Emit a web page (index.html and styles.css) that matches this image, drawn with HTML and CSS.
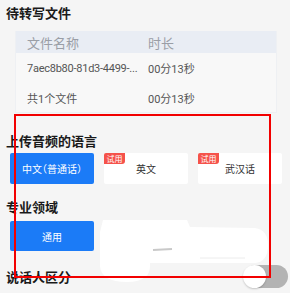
FILE: index.html
```html
<!DOCTYPE html>
<html lang="zh">
<head>
<meta charset="utf-8">
<link rel="stylesheet" href="styles.css">
</head>
<body>
<div class="page">
  <h2 class="title t1">待转写文件</h2>
  <div class="table">
    <div class="row head"><span class="c1">文件名称</span><span class="c2">时长</span></div>
    <div class="row r1"><span class="c1 fname">7aec8b80-81d3-4499-...</span><span class="c2">00分13秒</span></div>
    <div class="row r2"><span class="c1">共1个文件</span><span class="c2">00分13秒</span></div>
  </div>

  <h2 class="title t2">上传音频的语言</h2>
  <div class="options">
    <div class="opt active">中文（普通话）</div>
    <div class="opt"><span class="badge">试用</span>英文</div>
    <div class="opt"><span class="badge">试用</span>武汉话</div>
  </div>

  <h2 class="title t3">专业领域</h2>
  <div class="options o2">
    <div class="opt active">通用</div>
  </div>

  <div class="switch-row">
    <h2 class="title t4">说话人区分</h2>
    <div class="switch"><span class="knob"></span></div>
  </div>
</div>

<svg class="blot" width="290" height="293" viewBox="0 0 290 293">
  <path d="M103 220 L187 220 L190 227 L255 228 Q268 230 268 245 Q268 262 255 263 L150 263 Q152 282 127 282 Q101 282 100 266 L100 232 Z" fill="#ffffff"/>
  <path d="M153 250 L172 249" stroke="#c9c9c9" stroke-width="2" fill="none"/>
  <path d="M200 258 L245 258" stroke="#ececec" stroke-width="1" fill="none"/>
</svg>
<div class="mark"></div>
</body>
</html>
```
FILE: styles.css
```css
html, body {
  margin: 0;
  padding: 0;
  background: #f5f5f5;
  font-family: Roboto, "Noto Sans CJK SC", sans-serif;
}
.page {
  padding: 3px 6px 0 6px;
  width: 278px;
  height: 290px;
  overflow: hidden;
}
.title {
  margin: 0;
  font-family: "Noto Sans CJK SC", sans-serif;
  font-size: 13px;
  line-height: 20px;
  font-weight: 700;
  color: #1a1a1a;
}
.table {
  margin: 8px 7px 0 9px;
  background: #f8f8f8;
  border: 1px solid #eef0f3;
  border-top: none;
}
.row {
  display: flex;
  align-items: center;
  padding-left: 11px;
  height: 30px;
  font-size: 11px;
  color: #555;
}
.row.head {
  height: 22px;
  background: #e9edf4;
  font-size: 13px;
  color: #9a9ea6;
}
.row.r2 { height: 29px; }
.c1 { width: 121px; white-space: nowrap; overflow: hidden; }
.fname { letter-spacing: -0.25px; }
.t2 { margin-top: 18px; }
.options {
  display: flex;
  gap: 10px;
  margin: 2px 0 0 4px;
}
.opt {
  position: relative;
  width: 84px;
  height: 31px;
  background: #fff;
  border-radius: 2px;
  display: flex;
  align-items: center;
  justify-content: center;
  font-family: "Noto Sans CJK SC", sans-serif;
  font-feature-settings: "halt";
  font-size: 10px;
  color: #333;
}
.opt.active {
  background: #1b7bf7;
  color: #fff;
}
.badge {
  position: absolute;
  left: 0;
  top: 0;
  width: 21px;
  height: 11px;
  line-height: 11px;
  background: #f5524a;
  color: #fff;
  font-size: 8px;
  text-align: center;
  border-radius: 2px 0 3px 0;
}
.t3 { margin-top: 13px; }
.o2 { margin-top: 4px; }
.o2 .opt { height: 30px; }
.switch-row {
  display: flex;
  justify-content: space-between;
  align-items: center;
  margin-top: 14px;
  margin-right: -4px;
}
.switch {
  position: relative;
  width: 44px;
  height: 23px;
  border-radius: 12px;
  background: #b3b3b3;
}
.knob {
  position: absolute;
  left: -1px;
  top: 0;
  width: 23px;
  height: 23px;
  border-radius: 50%;
  background: #fff;
  box-shadow: 0 1px 2px rgba(0,0,0,0.2);
}
.blot {
  position: absolute;
  left: 0;
  top: 0;
}
.mark {
  position: absolute;
  left: 14px;
  top: 114px;
  width: 253px;
  height: 160px;
  border: 2px solid #f20000;
}
```
